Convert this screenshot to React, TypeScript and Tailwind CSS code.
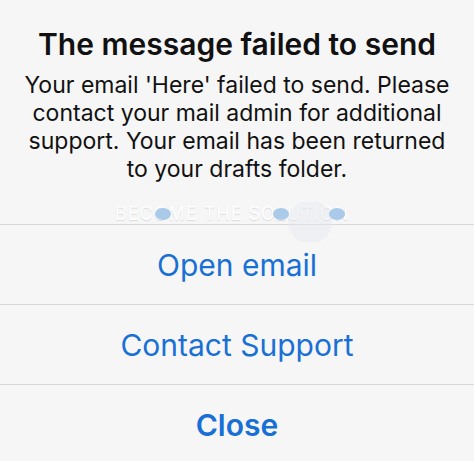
export default function App() {
  const actions = [
    { label: 'Open email', bold: false },
    { label: 'Contact Support', bold: false },
    { label: 'Close', bold: true },
  ];

  return (
    <div
      className="relative w-[474px] h-[461px] overflow-hidden bg-[#f6f6f7] text-[#111]"
      style={{ fontFamily: 'Inter, "Noto Sans", sans-serif' }}
    >
      <div className="flex flex-col items-center px-2 pt-[26px] pb-[41px] text-center">
        <h1 className="text-[30px] leading-[36px] font-semibold whitespace-nowrap">
          The message failed to send
        </h1>
        <p className="mt-[9px] text-[23px] leading-[28px] font-normal whitespace-nowrap">
          Your email 'Here' failed to send. Please
          <br />
          contact your mail admin for additional
          <br />
          support. Your email has been returned
          <br />
          to your drafts folder.
        </p>
      </div>

      {actions.map((a) => (
        <div
          key={a.label}
          className="flex h-[80px] items-center justify-center border-t border-[#d9d9db]"
        >
          <span
            className={`text-[30px] leading-[36px] text-[#1870d5] ${a.bold ? 'font-semibold' : 'font-normal'}`}
          >
            {a.label}
          </span>
        </div>
      ))}

      {/* watermark */}
      <div className="pointer-events-none absolute left-[115px] top-[202px] flex items-center">
        <span
          className="text-[18px] leading-[24px] tracking-[1px] text-white"
          style={{ textShadow: '0 1px 1px rgba(0,0,0,0.12)' }}
        >
          BECOME THE SOLUTION
        </span>
        <svg className="absolute left-0 top-0" width="250" height="40" viewBox="0 0 250 40">
          <circle cx="195" cy="20" r="22" fill="#e4e9ee" opacity="0.4" />
          <ellipse cx="48" cy="12" rx="8" ry="6" fill="#9cc2e6" opacity="0.85" />
          <ellipse cx="166" cy="12" rx="8" ry="6" fill="#9cc2e6" opacity="0.85" />
          <ellipse cx="222" cy="12" rx="8" ry="6" fill="#9cc2e6" opacity="0.85" />
        </svg>
      </div>
    </div>
  );
}
